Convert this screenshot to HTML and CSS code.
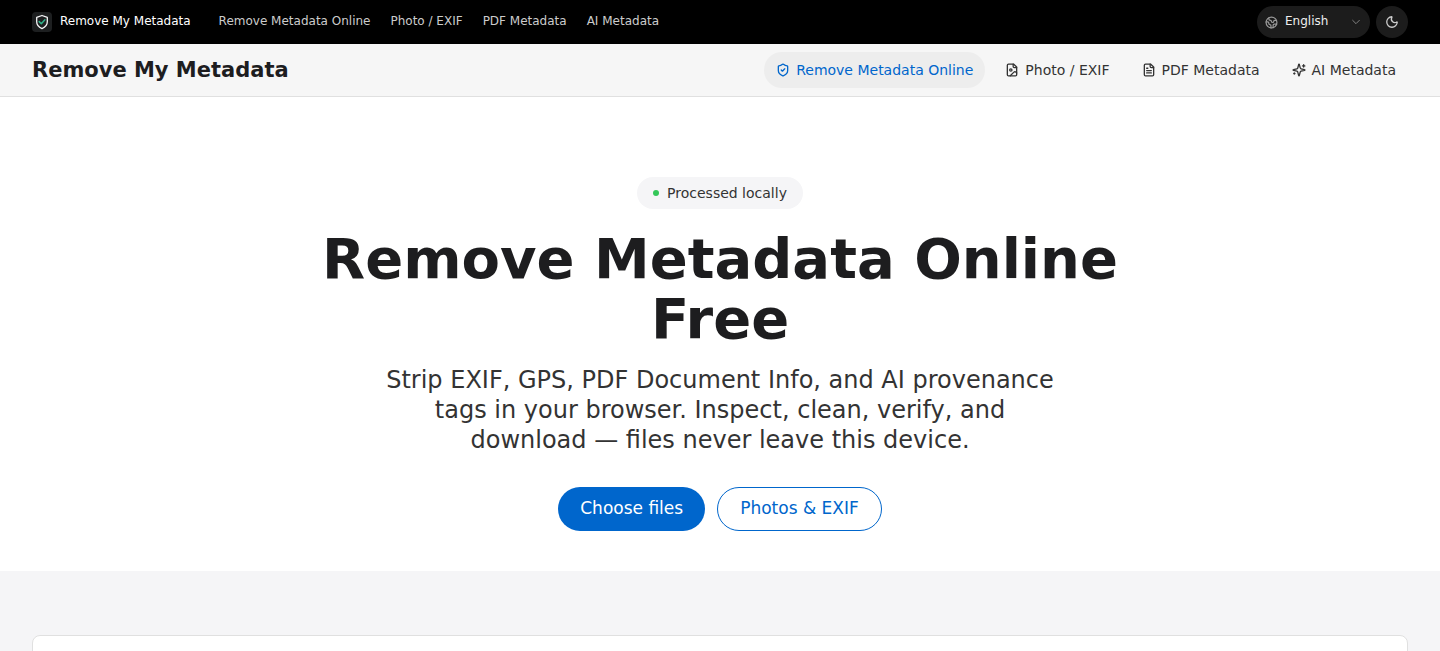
FILE: index.html
```html
<!DOCTYPE html>
<html lang="en">
<head>
    <meta charset="UTF-8">
    <meta name="viewport" content="width=device-width, initial-scale=1.0">
    <title>Remove Metadata Online Free</title>
    <link rel="stylesheet" href="styles.css">
</head>
<body>
    <header class="topbar">
        <a class="brand" href="#">
            <svg class="brand-logo" viewBox="0 0 20 20" fill="none" stroke-linecap="round" stroke-linejoin="round">
                <rect width="20" height="20" rx="4" fill="#1d1f20"/>
                <path d="M10 3.5 15.3 5.4v4.4c0 3.2-2 5.4-5.3 6.8-3.3-1.4-5.3-3.6-5.3-6.8V5.4z" stroke="#f5f5f7" stroke-width="1.3"/>
                <path d="m7.2 9.6 2.1 2.1 3.6-3.9" stroke="#2fb38a" stroke-width="1.5"/>
            </svg>
            <span class="topbar-text">Remove My Metadata</span>
        </a>
        <nav class="topbar-links topbar-text" aria-label="Site">
            <a href="#">Remove Metadata Online</a>
            <a href="#">Photo / EXIF</a>
            <a href="#">PDF Metadata</a>
            <a href="#">AI Metadata</a>
        </nav>
        <div class="topbar-tools">
            <div class="language">
                <svg class="icon language-globe" viewBox="0 0 24 24">
                    <circle cx="12" cy="12" r="10"/>
                    <path d="M21.54 15H17a2 2 0 0 0-2 2v4.54M7 3.34V5a3 3 0 0 0 3 3 2 2 0 0 1 2 2c0 1.1.9 2 2 2a2 2 0 0 0 2-2c0-1.1.9-2 2-2h3.17M11 21.95V18a2 2 0 0 0-2-2 2 2 0 0 1-2-2v-1a2 2 0 0 0-2-2H2.05"/>
                </svg>
                <select class="language-select" aria-label="Language">
                    <option>English</option>
                </select>
                <svg class="icon language-arrow" viewBox="0 0 24 24"><path d="m4 8 8 8 8-8"/></svg>
            </div>
            <button class="theme-button" type="button" aria-label="Dark mode">
                <svg class="icon" viewBox="0 0 24 24"><path d="M20.985 12.486a9 9 0 1 1-9.473-9.472c.405-.022.617.46.402.803a6 6 0 0 0 8.268 8.268c.344-.215.825-.004.803.401"/></svg>
            </button>
        </div>
    </header>

    <div class="subbar">
        <a class="subbar-title" href="#">Remove My Metadata</a>
        <nav class="tabs" aria-label="Tools">
            <a class="tab tab-active" href="#">
                <svg class="icon" viewBox="0 0 24 24"><path d="M20 13c0 5-3.5 7.5-7.66 8.95a1 1 0 0 1-.67-.01C7.5 20.5 4 18 4 13V6a1 1 0 0 1 1-1c2 0 4.5-1.2 6.24-2.72a1.17 1.17 0 0 1 1.52 0C14.51 3.81 17 5 19 5a1 1 0 0 1 1 1z"/><path d="m9 12 2 2 4-4"/></svg>
                Remove Metadata Online
            </a>
            <a class="tab" href="#">
                <svg class="icon" viewBox="0 0 24 24"><path d="M15 2H6a2 2 0 0 0-2 2v16a2 2 0 0 0 2 2h12a2 2 0 0 0 2-2V7z"/><path d="M14 2v4a2 2 0 0 0 2 2h4"/><circle cx="10" cy="12" r="2"/><path d="m20 17-1.3-1.3a2.4 2.4 0 0 0-3.4 0L9 22"/></svg>
                Photo / EXIF
            </a>
            <a class="tab" href="#">
                <svg class="icon" viewBox="0 0 24 24"><path d="M15 2H6a2 2 0 0 0-2 2v16a2 2 0 0 0 2 2h12a2 2 0 0 0 2-2V7z"/><path d="M14 2v4a2 2 0 0 0 2 2h4M10 9H8M16 13H8M16 17H8"/></svg>
                PDF Metadata
            </a>
            <a class="tab" href="#">
                <svg class="icon" viewBox="0 0 24 24"><path d="M9.9 15.5A2 2 0 0 0 8.5 14.1L2.4 12.5a.5.5 0 0 1 0-1L8.5 9.9A2 2 0 0 0 9.9 8.5l1.6-6.1a.5.5 0 0 1 1 0L14.1 8.5A2 2 0 0 0 15.5 9.9l6.1 1.6a.5.5 0 0 1 0 1L15.5 14.1a2 2 0 0 0-1.4 1.4l-1.6 6.1a.5.5 0 0 1-1 0z"/><path d="M20 3v4M22 5h-4M4 17v2M5 18H3"/></svg>
                AI Metadata
            </a>
        </nav>
    </div>

    <main>
        <section class="hero">
            <p class="badge"><span class="badge-dot"></span>Processed locally</p>
            <h1>Remove Metadata Online Free</h1>
            <p class="lead">Strip EXIF, GPS, PDF Document Info, and AI provenance tags in your browser. Inspect, clean, verify, and download — files never leave this device.</p>
            <div class="actions">
                <button class="button button-primary" type="button">Choose files</button>
                <a class="button button-outline" href="#">Photos &amp; EXIF</a>
            </div>
        </section>
        <section class="workspace">
            <div class="panel"></div>
        </section>
    </main>
</body>
</html>
```
FILE: styles.css
```css
* {
    box-sizing: border-box;
}
body {
    margin: 0;
    font-family: "DejaVu Sans", sans-serif;
    color: #1d1d1f;
    background: #fff;
}
a {
    color: inherit;
    text-decoration: none;
}
.icon {
    width: 14px;
    height: 14px;
    flex-shrink: 0;
    fill: none;
    stroke: currentColor;
    stroke-width: 2.25;
    stroke-linecap: round;
    stroke-linejoin: round;
}

/* Black bar */
.topbar {
    display: flex;
    align-items: center;
    height: 44px;
    padding: 0 32px;
    background: #000;
    color: #fff;
    font-size: 12px;
}
.topbar-text {
    padding-bottom: 2px;
}
.brand {
    display: flex;
    align-items: center;
    gap: 8px;
}
.brand-logo {
    width: 20px;
    height: 20px;
}
.topbar-links {
    display: flex;
    gap: 20px;
    margin-left: 28px;
    color: #ccc;
}
.topbar-tools {
    display: flex;
    gap: 6px;
    margin-left: auto;
}
.language {
    display: grid;
    align-items: center;
    width: 113px;
    height: 32px;
    border-radius: 16px;
    background: #1c1c1c;
}
.language > * {
    grid-area: 1 / 1;
}
.language-globe {
    width: 13px;
    height: 13px;
    margin-left: 8px;
    color: #999;
    pointer-events: none;
}
.language-arrow {
    width: 10px;
    height: 10px;
    margin-right: 9px;
    justify-self: end;
    color: #888;
    pointer-events: none;
}
.language-select {
    appearance: none;
    width: 100%;
    height: 32px;
    padding: 0 28px 2px;
    border: none;
    border-radius: 16px;
    background: transparent;
    color: #eee;
    font: inherit;
}
.theme-button {
    display: flex;
    align-items: center;
    justify-content: center;
    width: 32px;
    height: 32px;
    padding: 0;
    border: none;
    border-radius: 50%;
    background: #1c1c1c;
    color: #ccc;
}

/* Grey bar */
.subbar {
    display: flex;
    align-items: center;
    justify-content: space-between;
    height: 53px;
    padding: 0 32px;
    background: #f6f6f6;
    border-bottom: 1px solid #e0e0e0;
}
.subbar-title {
    font-size: 21px;
    font-weight: bold;
}
.tabs {
    display: flex;
    gap: 8px;
}
.tab {
    display: flex;
    align-items: center;
    gap: 6px;
    height: 36px;
    padding: 0 12px;
    border-radius: 18px;
    color: #333;
    font-size: 14px;
}
.tab-active {
    background: #ededed;
    color: #0066cc;
}

/* Hero */
.hero {
    display: flex;
    flex-direction: column;
    align-items: center;
    padding: 80px 32px 40px;
    text-align: center;
}
.badge {
    display: flex;
    align-items: center;
    gap: 8px;
    height: 32px;
    margin: 0 0 20px;
    padding: 0 16px;
    border-radius: 16px;
    background: #f5f5f7;
    color: #333;
    font-size: 14px;
}
.badge-dot {
    width: 6px;
    height: 6px;
    border-radius: 50%;
    background: #34c759;
}
h1 {
    max-width: 896px;
    margin: 0 0 16px;
    font-size: 56px;
    line-height: 60px;
}
.lead {
    max-width: 672px;
    margin: 0 0 32px;
    color: #333;
    font-size: 24px;
    line-height: 30px;
}
.actions {
    display: flex;
    gap: 12px;
}
.button {
    display: flex;
    align-items: center;
    height: 44px;
    padding: 0 22px 2px;
    border: none;
    border-radius: 22px;
    font-family: inherit;
    font-size: 17px;
}
.button-primary {
    background: #0066cc;
    color: #fff;
}
.button-outline {
    border: 1px solid #0066cc;
    background: #fff;
    color: #0066cc;
}

/* File panel */
.workspace {
    padding: 64px 32px;
    background: #f5f5f7;
}
.panel {
    min-height: 400px;
    border: 1px solid #e0e0e0;
    border-radius: 8px;
    background: #fff;
}
```
